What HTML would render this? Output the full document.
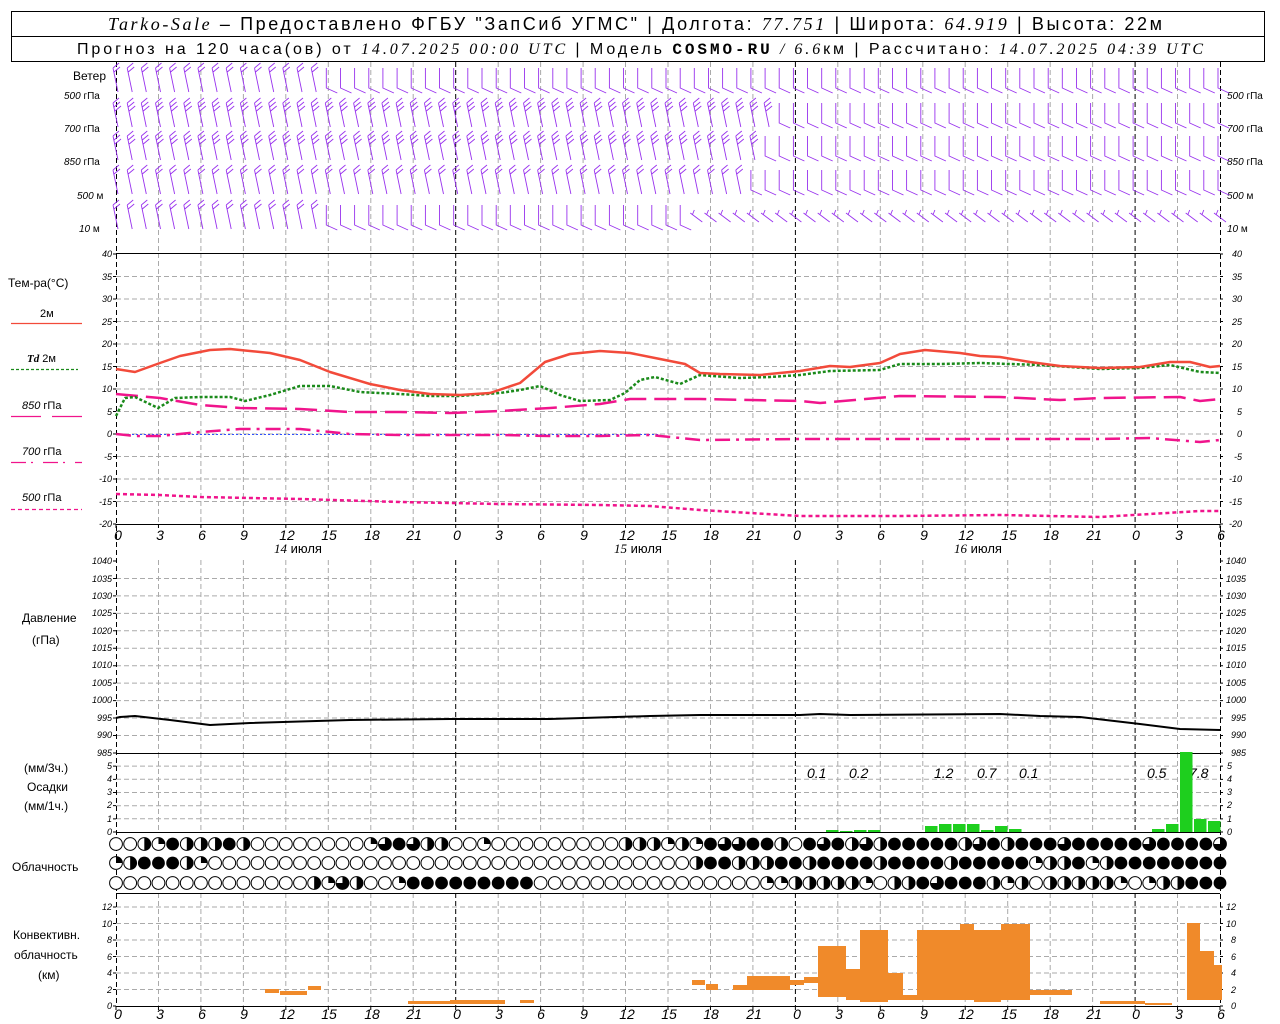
<!DOCTYPE html>
<html><head><meta charset="utf-8">
<style>
html,body{margin:0;padding:0;background:#fff;}
svg{display:block;}
text{font-family:"Liberation Sans",sans-serif;fill:#000;}
.t{font-size:9px;font-style:italic;}
.h{font-size:14px;font-style:italic;font-family:"Liberation Sans",sans-serif;}
.l{font-size:12px;}
.s{font-family:"Liberation Serif",serif;font-style:italic;}
</style></head><body>
<svg id="c" width="1280" height="1024" viewBox="0 0 1280 1024" xmlns="http://www.w3.org/2000/svg">
<rect width="1280" height="1024" fill="#fff"/>
<g id="grid"></g>
<rect x="11.5" y="11.5" width="1253" height="50" fill="none" stroke="#000"/>
<line x1="11" y1="36.5" x2="1265" y2="36.5" stroke="#000"/>
<text x="108" y="30" font-size="18" textLength="1054" lengthAdjust="spacing"><tspan class="s">Tarko-Sale</tspan> – Предоставлено ФГБУ "ЗапСиб УГМС" | Долгота: <tspan class="s">77.751</tspan> | Широта: <tspan class="s">64.919</tspan> | Высота: 22м</text>
<text x="77" y="54" font-size="16" textLength="1126" lengthAdjust="spacing">Прогноз на 120 часа(ов) от <tspan class="s">14.07.2025 00:00 UTC</tspan>  | Модель <tspan font-family="Liberation Mono,monospace" font-weight="bold">COSMO-RU</tspan> <tspan class="s">/ 6.6</tspan>км | Рассчитано: <tspan class="s">14.07.2025 04:39 UTC</tspan></text>

<g class="l">
<text x="73" y="80">Ветер</text>
<text x="8" y="287">Тем-ра(°C)</text>
<text x="40" y="317" font-size="11">2м</text>
<text x="27" y="362" font-size="11"><tspan class="s" font-weight="bold">Td</tspan>  2м</text>
<text x="22" y="409" font-size="11"><tspan font-style="italic">850</tspan> гПа</text>
<text x="22" y="455" font-size="11"><tspan font-style="italic">700</tspan> гПа</text>
<text x="22" y="501" font-size="11"><tspan font-style="italic">500</tspan> гПа</text>
<text x="22" y="622">Давление</text>
<text x="32" y="644">(гПа)</text>
<text x="24" y="772">(мм/3ч.)</text>
<text x="27" y="791">Осадки</text>
<text x="24" y="810">(мм/1ч.)</text>
<text x="12" y="871">Облачность</text>
<text x="13" y="939">Конвективн.</text>
<text x="14" y="959">облачность</text>
<text x="38" y="979">(км)</text>
</g>
<g font-size="10">
<text x="64" y="99"><tspan font-style="italic">500</tspan> гПа</text>
<text x="64" y="132"><tspan font-style="italic">700</tspan> гПа</text>
<text x="64" y="165"><tspan font-style="italic">850</tspan> гПа</text>
<text x="77" y="199"><tspan font-style="italic">500</tspan> м</text>
<text x="79" y="232"><tspan font-style="italic">10</tspan>   м</text>
<text x="1227" y="99"><tspan font-style="italic">500</tspan> гПа</text>
<text x="1227" y="132"><tspan font-style="italic">700</tspan> гПа</text>
<text x="1227" y="165"><tspan font-style="italic">850</tspan> гПа</text>
<text x="1227" y="199"><tspan font-style="italic">500</tspan> м</text>
<text x="1227" y="232"><tspan font-style="italic">10</tspan>   м</text>
</g>
<line x1="11" y1="323.5" x2="82" y2="323.5" stroke="#f24a3a" stroke-width="1.2"/>
<line x1="11" y1="369.5" x2="78" y2="369.5" stroke="#1a8a1a" stroke-width="1.2" stroke-dasharray="3,2"/>
<line x1="11" y1="416.5" x2="41" y2="416.5" stroke="#f0148c" stroke-width="1.2"/>
<line x1="52" y1="416.5" x2="82" y2="416.5" stroke="#f0148c" stroke-width="1.2"/>
<line x1="11" y1="462.5" x2="82" y2="462.5" stroke="#f0148c" stroke-width="1.2" stroke-dasharray="15,5,2,10"/>
<line x1="11" y1="509.5" x2="82" y2="509.5" stroke="#f0148c" stroke-width="1.2" stroke-dasharray="4,3"/>

<g class="t" id="tl" text-anchor="end">
<text x="112" y="257">40</text><text x="112" y="280">35</text><text x="112" y="302">30</text><text x="112" y="325">25</text><text x="112" y="347">20</text><text x="112" y="370">15</text><text x="112" y="392">10</text><text x="112" y="415">5</text><text x="112" y="437">0</text><text x="112" y="460">-5</text><text x="112" y="482">-10</text><text x="112" y="505">-15</text><text x="112" y="527">-20</text>
</g>
<use href="#tl" x="1130"/>
<g class="t" id="pl" text-anchor="end">
<text x="112" y="564">1040</text><text x="112" y="582">1035</text><text x="112" y="599">1030</text><text x="112" y="616">1025</text><text x="112" y="634">1020</text><text x="112" y="651">1015</text><text x="112" y="668">1010</text><text x="112" y="686">1005</text><text x="112" y="703">1000</text><text x="112" y="721">995</text><text x="112" y="738">990</text><text x="112" y="756">985</text>
</g>
<use href="#pl" x="1134"/>
<g class="t" id="rl" text-anchor="end">
<text x="112" y="769">5</text><text x="112" y="782">4</text><text x="112" y="795">3</text><text x="112" y="808">2</text><text x="112" y="822">1</text><text x="112" y="835">0</text>
</g>
<use href="#rl" x="1120"/>
<g class="t" id="kl" text-anchor="end">
<text x="112" y="910">12</text><text x="112" y="927">10</text><text x="112" y="943">8</text><text x="112" y="960">6</text><text x="112" y="976">4</text><text x="112" y="993">2</text><text x="112" y="1009">0</text>
</g>
<use href="#kl" x="1124"/>

<g class="h" id="hrs" text-anchor="middle">
<text x="118" y="540">0</text><text x="160" y="540">3</text><text x="202" y="540">6</text><text x="244" y="540">9</text><text x="287" y="540">12</text><text x="329" y="540">15</text><text x="372" y="540">18</text><text x="414" y="540">21</text>
<text x="457" y="540">0</text><text x="499" y="540">3</text><text x="541" y="540">6</text><text x="584" y="540">9</text><text x="627" y="540">12</text><text x="669" y="540">15</text><text x="711" y="540">18</text><text x="754" y="540">21</text>
<text x="797" y="540">0</text><text x="839" y="540">3</text><text x="881" y="540">6</text><text x="924" y="540">9</text><text x="966" y="540">12</text><text x="1009" y="540">15</text><text x="1051" y="540">18</text><text x="1094" y="540">21</text>
<text x="1136" y="540">0</text><text x="1179" y="540">3</text><text x="1221" y="540">6</text>
</g>
<use href="#hrs" y="479"/>
<g font-size="13">
<text x="274" y="553"><tspan class="s">14</tspan> июля</text>
<text x="614" y="553"><tspan class="s">15</tspan> июля</text>
<text x="954" y="553"><tspan class="s">16</tspan> июля</text>
</g>
<g class="h" font-size="13">
<text x="807" y="778">0.1</text><text x="849" y="778">0.2</text><text x="934" y="778">1.2</text><text x="977" y="778">0.7</text><text x="1019" y="778">0.1</text><text x="1147" y="778">0.5</text><text x="1189" y="778">7.8</text>
</g>
<g id="dyn"></g>
</svg>
<script>
(function(){
const X=h=>116+h*14.1538;
let g='';
const vl=(x,y1,y2,c)=>`<line x1="${x}" y1="${y1}" x2="${x}" y2="${y2}" stroke="${c}" stroke-dasharray="5,3"/>`;
const panels=[[62,253],[253,524],[560,753],[753,832],[893,1006]];
for(let h=3;h<78;h+=3){let x=X(h).toFixed(1);let day=(h%24==0);
 for(const p of panels) g+=vl(x,p[0],p[1],day?'#000':'#aaa');}
const hl=(y)=>`<line x1="116" y1="${y}" x2="1220" y2="${y}" stroke="#aaa" stroke-dasharray="5,3"/>`;
for(let t=35;t>=-15;t-=5) g+=hl((254+(40-t)*4.5).toFixed(1));
for(let p=1035;p>=990;p-=5) g+=hl((561+(1040-p)*3.49).toFixed(1));
for(let v=1;v<=5;v++) g+=hl((832-v*13.17).toFixed(1));
for(let k=2;k<=12;k+=2) g+=hl((1006-k*8.25).toFixed(1));
g+=vl(116.5,62,1006,'#000');g+=vl(1220.5,62,1006,'#000');
g+=`<path d="M116,253.5H1220M116,524.5H1220M116,753.5H1220M116,832.5H1220M116,893.5H1220M116,1006.5H1220" stroke="#000" fill="none"/>`;
let tk='';
const tick=(y)=>{tk+=`M113,${y}H116M1220,${y}H1223`;};
for(let t=40;t>=-20;t-=5) tick(254+(40-t)*4.5);
for(let p=1040;p>=985;p-=5) tick(561+(1040-p)*3.49);
for(let v=0;v<=6;v++) tick(832-v*13.17);
for(let k=0;k<=12;k+=2) tick(1006-k*8.25);
for(let h=0;h<=78;h+=3){tk+=`M${X(h)},524V528M${X(h)},1006V1010`;}
g+=`<path d="${tk}" stroke="#000"/>`;
document.getElementById('grid').innerHTML=g;

let d='';
const A="m-3,-12 l5,24 m-5,-24 l6,-5 m-5,9 l6,-5";
const A2="m-3,-12 l5,24 m-5,-24 l6,-5 m-5,9 l6,-5 m-5,9 l6,-5";
const B="m-2,-12 l0,20 l11,5";
const C="m-6,-4 l12,9 m-10,-7 l2,-5";
const rows=[[80,15,A],[115,47,A2],[148,46,A2],[182,45,A],[217,15,A]];
let wp='';
rows.forEach((r,i)=>{for(let h=0;h<=78;h++){let s=h<r[1]?r[2]:B; if(i==4&&h>40)s=C; if(i==3&&h>56)s=B;
 wp+=`M${X(h).toFixed(1)},${r[0]}`+s;}});
d+=`<path d="${wp}" stroke="#9933ee" fill="none" stroke-width="0.9"/>`;
const pl=(pts,c,w,da)=>`<polyline points="${pts}" fill="none" stroke="${c}" stroke-width="${w}" ${da?`stroke-dasharray="${da}"`:''} stroke-linejoin="round"/>`;
d+=`<line x1="116" y1="434.5" x2="660" y2="434.5" stroke="#3050ff" stroke-dasharray="2,2"/>`;
d+=pl("116,494 160,495 200,497 300,499 400,502 450,503 500,504 600,505 650,506 700,510 800,516 900,516 1000,515 1100,517 1150,514 1200,511 1220,511","#f0148c",2.5,"4,3");
d+=pl("116,434 135,436 160,436 200,432 240,429 300,429 350,434 400,435 500,435 550,436 600,436 650,435 700,440 800,439 900,439 1000,439 1100,439 1150,438 1200,442 1220,440","#f0148c",2.5,"15,6,3,6");
d+=pl("116,394 160,398 200,405 240,408 300,409 350,412 400,412 450,413 500,411 550,408 600,404 630,399 700,399 800,401 820,403 900,396 1000,397 1060,400 1100,398 1180,397 1200,401 1220,399","#f0148c",2.5,"22,8");
d+=pl("116,416 125,398 135,397 158,408 175,398 200,397 230,397 245,401 270,395 300,386 330,386 360,392 400,394 430,396 460,396 500,393 520,390 540,386 560,395 580,401 610,400 625,393 640,380 655,377 680,384 700,375 740,378 770,377 800,375 830,371 880,370 900,364 940,364 980,363 1040,365 1100,369 1140,368 1170,365 1200,372 1220,373","#1a8a1a",2.5,"3,2");
d+=pl("116,369 135,372 160,363 180,356 210,350 230,349 270,353 300,360 330,372 370,384 400,390 430,394 460,395 490,393 520,383 545,362 570,354 600,351 630,353 660,359 685,364 700,373 720,374 760,375 800,371 830,366 850,367 880,363 900,354 925,350 960,353 980,356 1000,357 1030,362 1060,366 1100,368 1140,367 1170,362 1190,362 1210,367 1220,366","#f24a3a",2.5);
d+=pl("116,718 120,717 135,716 170,720 210,725 250,723 350,720 450,719 550,719 650,716 700,715 800,715 820,714 850,715 1000,714 1040,716 1080,717 1140,724 1180,729 1220,730","#000",2);
const pb=[[826,830],[840,831],[854,830],[868,830],[925,826],[939,824],[953,824],[967,824],[981,830],[995,826],[1009,829],[1152,829],[1166,824],[1180,752],[1194,819],[1208,821]];
pb.forEach(b=>{d+=`<rect x="${b[0]}" y="${b[1]}" width="12.5" height="${832-b[1]}" fill="#1ecf1e"/>`;});
const cb=[[265,279,989,993],[280,307,991,995],[308,321,986,990],[408,450,1001,1004],[450,505,1000,1004],[520,534,1000,1003],[692,705,980,985],[706,718,984,990],[733,747,985,990],[747,790,976,990],[790,804,980,985],[804,818,977,983],[818,846,946,997],[846,860,969,1000],[860,888,930,1002],[888,903,973,1000],[903,917,995,1000],[917,960,930,1000],[960,974,924,1000],[974,1001,930,1002],[1001,1030,924,1000],[1030,1072,990,995],[1100,1145,1001,1004],[1145,1172,1003,1005],[1187,1200,923,1000],[1200,1214,951,1000],[1214,1222,965,1000]];
cb.forEach(b=>{d+=`<rect x="${b[0]}" y="${b[2]}" width="${b[1]-b[0]}" height="${b[3]-b[2]}" fill="#f08a2a"/>`;});
const pad=s=>(s+'x'.repeat(79)).slice(0,79);
const R=[pad("oohqxhhhxhooooooooqtxthhooqoooooooooh"+"hhqhqxttxxhoxtxhthxxxxxhtxhxxxtxxxxxtxxxxt"),
 pad("qhxxxhq"+"o".repeat(34)+"hxxhhhxxhxxxxhxxxxhxxxxxqhhxqhxxxxxxxx"),
 pad("o".repeat(14)+"hqthooq"+"xxxxxxxxx"+"o".repeat(16)+"qqhhhhhqohhxtxxxhqhohhhhhqoqhh")];
const ys=[844,863,883];const r=6.4;
R.forEach((s,i)=>{const cy=ys[i];for(let h=0;h<79;h++){const cx=X(h);const t=s[h];
 if(t=='x'){d+=`<circle cx="${cx}" cy="${cy}" r="${r}" fill="#000"/>`;continue;}
 d+=`<circle cx="${cx}" cy="${cy}" r="${r}" fill="#fff" stroke="#000" stroke-width="1"/>`;
 if(t=='h')d+=`<path d="M${cx},${cy-r}A${r},${r} 0 0 1 ${cx},${cy+r}Z" fill="#000"/>`;
 if(t=='q')d+=`<path d="M${cx},${cy}V${cy-r}A${r},${r} 0 0 1 ${cx+r},${cy}Z" fill="#000"/>`;
 if(t=='t')d+=`<path d="M${cx},${cy}V${cy-r}A${r},${r} 0 1 1 ${cx-r},${cy}Z" fill="#000"/>`;
}});
document.getElementById('dyn').innerHTML=d;
})();
</script>
</body></html>
